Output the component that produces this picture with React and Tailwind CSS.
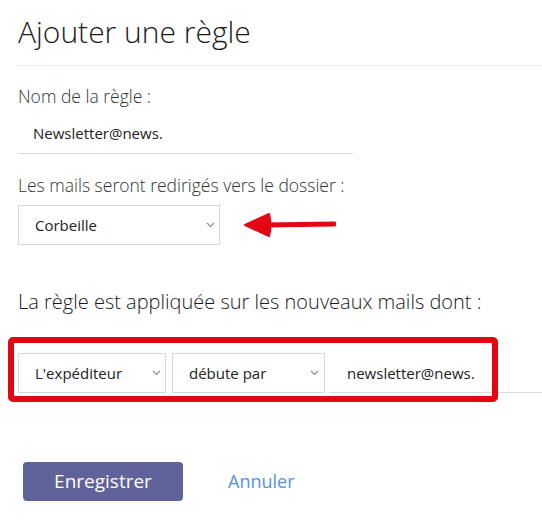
import React from "react";

function Chevron() {
  return (
    <svg width="9" height="6" viewBox="0 0 9 6" className="shrink-0">
      <polyline points="1,1 4.5,4.5 8,1" fill="none" stroke="#8a8a8a" strokeWidth="1.1" />
    </svg>
  );
}

function Select({ label, w, pr }) {
  return (
    <div className={`${w} h-[40px] border border-[#d6d6de] bg-white flex items-center justify-between pl-[16px] ${pr} shrink-0`}>
      <span className="text-[15px] leading-[20px] text-[#222]">{label}</span>
      <Chevron />
    </div>
  );
}

export default function App() {
  return (
    <div className="w-[542px] h-[529px] bg-white overflow-hidden font-['Open_Sans',sans-serif] text-[#333]">
      <h1 className="pl-[18px] pt-[11px] text-[30px] leading-[41px] font-light text-[#1a1a1a]">Ajouter une règle</h1>
      <div className="ml-[18px] mt-[13px] border-t border-[#ebebeb]" />
      <div className="pl-[18px]">
        <div className="mt-[18px] text-[17.5px] leading-[24px] font-light text-[#333]">Nom de la règle :</div>
        <div className="w-[335px] h-[46px] pt-[15px] pl-[15px] border-b border-[#d9d9d9] text-[15px] leading-[20px] text-[#222]">
          Newsletter@news.
        </div>
        <div className="mt-[19px] text-[17.5px] leading-[24px] font-light text-[#333]">Les mails seront redirigés vers le dossier :</div>
        <div className="mt-[8px] flex items-center">
          <Select label="Corbeille" w="w-[202px]" pr="pr-[4px]" />
          <svg width="92" height="26" viewBox="0 0 92 26" className="ml-[24px]">
            <path d="M22 13 L90 12" stroke="#e30613" strokeWidth="5" strokeLinecap="round" />
            <path d="M1 13 L25 2 Q28 13 25 24 Z" fill="#e30613" stroke="#e30613" strokeWidth="2" strokeLinejoin="round" />
          </svg>
        </div>
        <div className="mt-[43px] text-[20px] leading-[28px] font-light text-[#1a1a1a]">La règle est appliquée sur les nouveaux mails dont :</div>
        <div className="relative mt-[37px] flex items-stretch h-[40px]">
          <Select label="L'expéditeur" w="w-[148px]" pr="pr-[4px]" />
          <div className="ml-[6px]">
            <Select label="débute par" w="w-[153px]" pr="pr-[5px]" />
          </div>
          <div className="ml-[5px] flex-1 flex items-center pl-[17px] border-b border-[#d9d9d9] text-[15px] leading-[20px] text-[#222]">
            newsletter@news.
          </div>
          <div className="absolute left-[-10px] top-[-16px] w-[490px] h-[65px] border-[6px] border-[#e30613] rounded-[5px]" />
        </div>
        <div className="mt-[69px] ml-[5px] flex items-center">
          <button className="w-[160px] h-[39px] rounded-[4px] bg-[#5f6399] text-white text-[19px] font-medium">Enregistrer</button>
          <span className="ml-[45px] text-[18px] text-[#5b8fe0]">Annuler</span>
        </div>
      </div>
    </div>
  );
}
